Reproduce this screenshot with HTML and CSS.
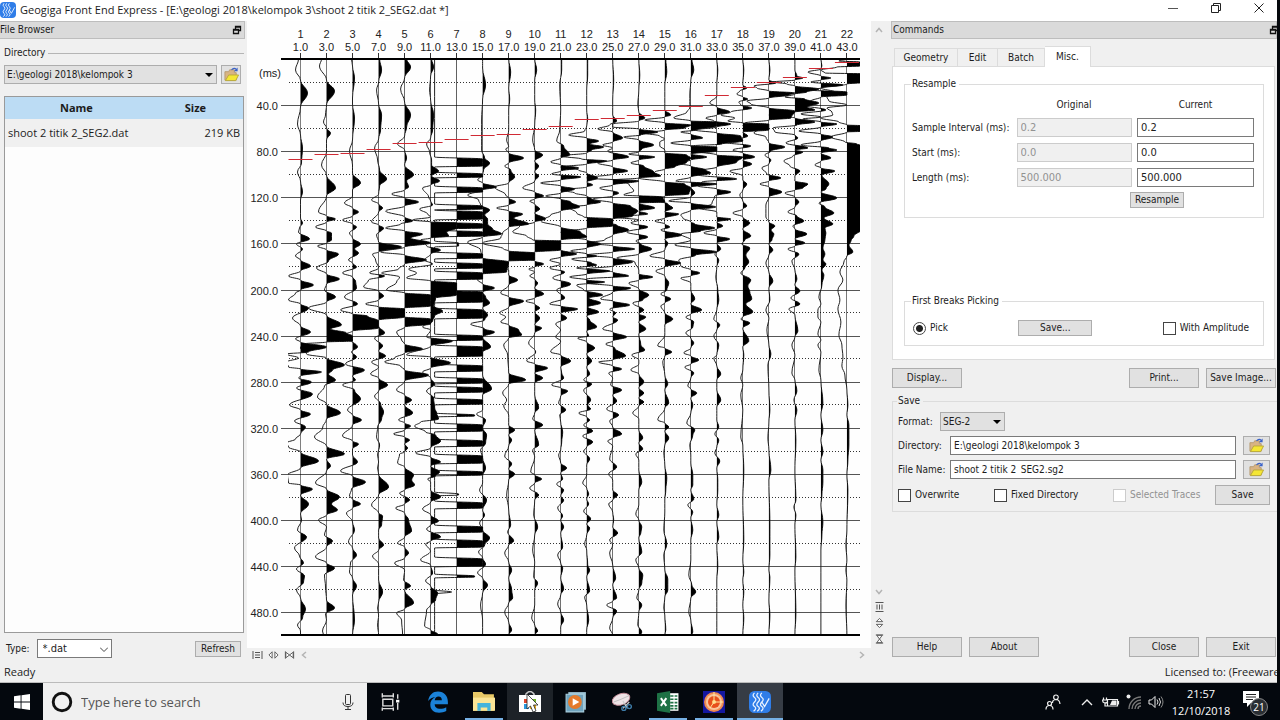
FILE: index.html
```html
<!DOCTYPE html>
<html lang="en">
<head>
<meta charset="utf-8">
<title>Geogiga Front End Express</title>
<link rel="stylesheet" href="styles.css">
</head>
<body>
<svg class="defs" aria-hidden="true">
  <symbol id="folder" viewBox="0 0 16 16">
    <path d="M1 14V5h4l1-2h5v3h2v8z" fill="#d9b484" stroke="#b89a70"/>
    <path d="M1.500 14.500L5 8.500h10.500L12.500 14.500z" fill="#f4e634" stroke="#b8a83a"/>
    <path d="M8 3q3-3 5-.5" fill="none" stroke="#3a62c8" stroke-width="1.300"/>
    <path d="M14.500 .5v4h-4z" fill="#3a62c8"/>
  </symbol>
  <symbol id="float" viewBox="0 0 10 10">
    <path d="M3.500 4V1.500h5v4H6M3.500 2h5M1.500 4.500h5v4h-5zM1.500 5h5" fill="none" stroke="#111" stroke-width="1.300"/>
  </symbol>
  <symbol id="wave" viewBox="0 0 24 24">
    <rect width="24" height="24" rx="6" fill="#2f7de8"/>
    <path d="M6 2q-3 3 0 5t0 5 0 5-1 5M10 2q-3 3 0 5t0 5 0 5-1 5M14 2q-3 3 0 5t0 5 0 5-1 5M14 12l3 5 5-9" fill="none" stroke="#e8f2ff" stroke-width="1.400"/>
  </symbol>
  <symbol id="lines" viewBox="0 0 10 10">
    <path d="M.5 1v8M9.500 1v8M2.500 2.500h5M2.500 5h5M2.500 7.500h5" stroke="#555" fill="none"/>
  </symbol>
  <symbol id="outward" viewBox="0 0 12 10">
    <path d="M4.500 1.500v7L1 5zM7.500 1.500v7L11 5z" fill="#fff" stroke="#555"/>
  </symbol>
  <symbol id="inward" viewBox="0 0 12 10">
    <path d="M1.500 1v8M10.500 1v8M2 2l4 3-4 3zM10 2L6 5l4 3z" fill="#fff" stroke="#555"/>
  </symbol>
  <symbol id="chev" viewBox="0 0 8 8">
    <path d="M6 1L2.500 4 6 7" fill="none" stroke="#b4b4b4" stroke-width="1.500"/>
  </symbol>
</svg>

<div class="window">
  <header class="titlebar">
    <svg class="app-icon"><use href="#wave"/></svg>
    <h1 class="title">Geogiga Front End Express - [E:\geologi 2018\kelompok 3\shoot 2 titik 2_SEG2.dat *]</h1>
    <div class="win-buttons">
      <button aria-label="Minimize"><svg viewBox="0 0 10 10"><path d="M0 5.500h10" stroke="#555"/></svg></button>
      <button aria-label="Restore"><svg viewBox="0 0 10 10"><path d="M.5 2.500h7v7h-7zM2.500 2.500v-2h7v7h-2" fill="none" stroke="#222"/></svg></button>
      <button aria-label="Close window"><svg viewBox="0 0 10 10"><path d="M.5 .5l9 9M9.500 .5l-9 9" stroke="#222"/></svg></button>
    </div>
  </header>

  <div class="main">
    <aside class="browser">
      <h2 class="dock-head">File Browser<svg><use href="#float"/></svg></h2>
      <div class="browser-body">
        <div class="rule-label"><label for="dir">Directory</label></div>
        <div class="dir-row">
          <span class="combo grow"><select id="dir"><option>E:\geologi 2018\kelompok 3</option></select><svg viewBox="0 0 8 4"><path d="M0 0h8L4 4z"/></svg></span>
          <button class="icon-btn small" aria-label="Open folder"><svg><use href="#folder"/></svg></button>
        </div>
        <div class="files">
          <table>
            <thead><tr><th class="col-name">Name</th><th>Size</th></tr></thead>
            <tbody><tr><td>shoot 2 titik 2_SEG2.dat</td><td class="num">219 KB</td></tr></tbody>
          </table>
        </div>
        <div class="type-row">
          <label for="type">Type:</label>
          <span class="combo white"><select id="type"><option>*.dat</option></select><svg class="open" viewBox="0 0 8 5"><path d="M0 .5l4 4 4-4" fill="none" stroke="#444"/></svg></span>
          <button class="btn refresh">Refresh</button>
        </div>
      </div>
    </aside>

    <section class="view">
      <svg id="chart" class="chart" viewBox="247 21 624 627" role="img" aria-label="Shot record"></svg>
      <div class="vbar">
        <svg class="up"><use href="#chev"/></svg>
        <div class="vtools">
          <svg class="down"><use href="#chev"/></svg>
          <svg class="turn tool"><use href="#lines"/></svg>
          <svg class="turn tool"><use href="#outward"/></svg>
          <svg class="turn tool"><use href="#inward"/></svg>
        </div>
      </div>
      <div class="hbar">
        <svg class="tool"><use href="#lines"/></svg>
        <svg class="tool"><use href="#outward"/></svg>
        <svg class="tool"><use href="#inward"/></svg>
        <svg class="left"><use href="#chev"/></svg>
        <svg class="right"><use href="#chev"/></svg>
      </div>
    </section>

    <aside class="commands">
      <h2 class="dock-head">Commands<svg><use href="#float"/></svg></h2>
      <nav class="tabs" role="tablist">
        <button class="tab wide" role="tab">Geometry</button>
        <button class="tab" role="tab">Edit</button>
        <button class="tab mid" role="tab">Batch</button>
        <button class="tab active" role="tab" aria-selected="true">Misc.</button>
      </nav>
      <div class="pane">
        <fieldset class="group resample">
          <legend>Resample</legend>
          <div class="grid">
            <span></span><span class="head">Original</span><span class="head">Current</span>
            <label for="si">Sample Interval (ms):</label><input aria-label="Original sample interval" value="0.2" disabled><input id="si" value="0.2">
            <label for="st">Start (ms):</label><input aria-label="Original start" value="0.0" disabled><input id="st" value="0.0">
            <label for="le">Length (ms):</label><input aria-label="Original length" value="500.000" disabled><input id="le" value="500.000">
          </div>
          <button class="btn do-resample">Resample</button>
        </fieldset>
        <fieldset class="group picking">
          <legend>First Breaks Picking</legend>
          <div class="pick-row">
            <label class="check"><input type="radio" checked>Pick</label>
            <button class="btn pick-save">Save...</button>
            <label class="check"><input type="checkbox">With Amplitude</label>
          </div>
        </fieldset>
      </div>
      <div class="row actions">
        <button class="btn big">Display...</button>
        <button class="btn big push">Print...</button>
        <button class="btn big">Save Image...</button>
      </div>
      <fieldset class="group save">
        <legend>Save</legend>
        <div class="field format">
          <label for="fmt">Format:</label>
          <span class="combo"><select id="fmt"><option>SEG-2</option></select><svg viewBox="0 0 8 4"><path d="M0 0h8L4 4z"/></svg></span>
        </div>
        <div class="field">
          <label for="sd">Directory:</label><input id="sd" value="E:\geologi 2018\kelompok 3">
          <button class="icon-btn" aria-label="Choose directory"><svg><use href="#folder"/></svg></button>
        </div>
        <div class="field">
          <label for="sf">File Name:</label><input id="sf" value="shoot 2 titik 2_SEG2.sg2">
          <button class="icon-btn" aria-label="Choose file"><svg><use href="#folder"/></svg></button>
        </div>
        <div class="checks">
          <label class="check"><input type="checkbox">Overwrite</label>
          <label class="check"><input type="checkbox">Fixed Directory</label>
          <label class="check off"><input type="checkbox" disabled>Selected Traces</label>
          <button class="btn save-btn">Save</button>
        </div>
      </fieldset>
      <div class="row bottom">
        <button class="btn big">Help</button>
        <button class="btn big">About</button>
        <button class="btn big push">Close</button>
        <button class="btn big">Exit</button>
      </div>
    </aside>
  </div>
  <footer class="status"><span>Ready</span><span class="license">Licensed to: (Freeware)</span></footer>
</div>

<div class="taskbar">
  <button class="start" aria-label="Start"><svg viewBox="0 0 16 16"><path d="M0 2.300l6.600-1v6.200H0zM7.500 1.200L16 0v7.500H7.500zM0 8.400h6.600v6.300L0 13.700zM7.500 8.400H16V16l-8.500-1.200z" fill="#fff"/></svg></button>
  <div class="search">
    <svg class="ring" viewBox="0 0 20 20"><circle cx="10" cy="10" r="8" fill="none" stroke="#111" stroke-width="2.600"/></svg>
    <input class="search-box" aria-label="Search" placeholder="Type here to search">
    <svg class="mic" viewBox="0 0 12 16"><rect x="3.500" y=".5" width="5" height="10" rx="1" fill="none" stroke="#333"/><path d="M1 8.500q0 4 5 4t5-4M6 12.500V15M3 15.500h6" fill="none" stroke="#333"/></svg>
  </div>
  <button class="task view-btn" aria-label="Task view"><svg viewBox="0 0 20 20"><path d="M3 2v4M13 2v4M3 4.500h10M3.500 7.500h9v6h-9zM3 18v-3M13 18v-3M3 16h10M17 3v4M17 11v6" fill="none" stroke="#ddd" stroke-width="1.300"/><path d="M15.500 8h3v2.500h-3z" fill="#fff"/></svg></button>
  <button class="task" aria-label="Edge"><svg viewBox="0 0 20 20"><path d="M1 9C2 3.500 5.500.5 10 .5c5.500 0 9 4 9 9.500v2H7c0 2.500 2 4.200 5 4.200 2 0 4-.6 5.500-1.500v3.500c-2 1-4 1.500-6.500 1.500-5 0-8-3-8-7.500C3 9.500 4.500 7 7.500 5.500 5 6 2.500 7 1 9zM7 8.500h6.500C13.500 6.500 12.500 5 10.500 5S7.300 6.500 7 8.500z" fill="#1b82d8"/></svg></button>
  <button class="task run" aria-label="File Explorer"><svg viewBox="0 0 20 20"><path d="M0 1h8l2 2h9v15H0z" fill="#e8c866"/><path d="M0 6h20v12H0z" fill="#fbe596"/><path d="M4 18v-7h12v7h-3v-3H7v3z" fill="#45b4dc"/></svg></button>
  <button class="task hover" aria-label="Store"><svg viewBox="0 0 22 22"><path d="M7 5V3q4-5 8 0v2" fill="none" stroke="#ccc" stroke-width="1.500"/><path d="M0 4h22v17H0z" fill="#fff"/><path d="M5 8h5v4H5z" fill="#e04830"/><path d="M11 8h6v4h-6z" fill="#72b52c"/><path d="M5 13h5v5H5z" fill="#2a9adf"/><path d="M11 13h6v5h-6z" fill="#edb020"/><path d="M8 3v15l3.500-3 2.500 6 3-1-2.500-6H19z" fill="#fff" stroke="#222" stroke-width=".8"/></svg></button>
  <button class="task" aria-label="Media player"><svg viewBox="0 0 20 20"><path d="M3 1h16v16H3z" fill="#9ec3d4"/><path d="M1 3h16v16H1z" fill="#6fa3bd" stroke="#a8cddd"/><circle cx="9" cy="10" r="6.300" fill="#e47a2c"/><path d="M7 6.500v7l6-3.500z" fill="#fff"/></svg></button>
  <button class="task" aria-label="Snipping Tool"><svg viewBox="0 0 24 20"><ellipse cx="11" cy="7" rx="10" ry="6" transform="rotate(-20 11 7)" fill="#eee3e6" stroke="#c58c98"/><path d="M11 7l9-4M11 7l-8 3" stroke="#bbb"/><path d="M13 9l5 8M20 10l-7 7" stroke="#ccc" stroke-width="1.300"/><circle cx="14" cy="17" r="2.200" fill="none" stroke="#3e7ca8" stroke-width="1.500"/><circle cx="20" cy="15" r="2.200" fill="none" stroke="#3e7ca8" stroke-width="1.500"/></svg></button>
  <button class="task run" aria-label="Excel"><svg viewBox="0 0 20 20"><path d="M10 2h9.500v16H10z" fill="#fff"/><path d="M12 4.500h3M16 4.500h2.500M12 7.500h3M16 7.500h2.500M12 10.500h3M16 10.500h2.500M12 13.500h3M16 13.500h2.500M12 16h3M16 16h2.500" stroke="#217346" stroke-width="1.500"/><path d="M0 2l12-2v20L0 18z" fill="#1e7145"/><path d="M3.500 6.500l5 7M8.500 6.500l-5 7" stroke="#fff" stroke-width="1.800"/></svg></button>
  <button class="task run" aria-label="Recorder"><svg viewBox="0 0 22 22"><path d="M0 0h22v22H0z" fill="#1518a0"/><circle cx="11" cy="11" r="10" fill="#f08a50"/><circle cx="11" cy="11" r="8" fill="#f9c49a"/><circle cx="11" cy="11" r="6" fill="#e8501c"/><circle cx="11" cy="11" r="2" fill="#ffd27a"/><path d="M11 1v10h9M11 11l-4 6" fill="none" stroke="#ffe9a0"/></svg></button>
  <button class="task run current" aria-label="Geogiga"><svg><use href="#wave"/></svg></button>
  <div class="tray">
    <svg class="people" viewBox="0 0 16 16"><path d="M4.500 7.500a2 2 0 1 1 .1 4 2 2 0 0 1-.1-4zM1 15.500q0-4 3.500-4t3.500 4M11 1a2.300 2.300 0 1 1-.1 4.600A2.300 2.300 0 0 1 11 1zM7.500 9q0-3.500 3.500-3.500T15 10" fill="none" stroke="#eee" stroke-width="1.200"/></svg>
    <svg class="t-chev" viewBox="0 0 12 8"><path d="M1 7l5-5 5 5" fill="none" stroke="#eee" stroke-width="1.400"/></svg>
    <svg class="battery" viewBox="0 0 18 12"><path d="M5.500 3.500h10v6.500h-10zM16.500 5v3.500M1.500 1.500v3M4.500 1.500v3M.5 4h5v2q-2 2-4.500 0zM3 7v3h2.500" fill="none" stroke="#eee" stroke-width="1.200"/><path d="M10 4.500h4.500V9H8z" fill="#eee"/></svg>
    <svg class="wifi" viewBox="0 0 16 16"><path d="M3 15A12 12 0 0 1 15 3M6 15a9 9 0 0 1 9-9M9 15a6 6 0 0 1 6-6M12 15a3 3 0 0 1 3-3" fill="none" stroke="#777" stroke-width="1.400"/><circle cx="2.500" cy="2.500" r="2" fill="#eee"/></svg>
    <svg class="sound" viewBox="0 0 16 14"><path d="M1 5h2.500L7 1.500v11L3.500 9H1z" fill="none" stroke="#eee"/><path d="M9 4.500q2 2.500 0 5M11 3q3 4 0 8" fill="none" stroke="#ddd"/><path d="M13 1.500q4 5.500 0 11" fill="none" stroke="#888"/></svg>
    <div class="clock"><span>21:57</span><span>12/10/2018</span></div>
    <button class="notes" aria-label="Notifications"><svg viewBox="0 0 16 16"><path d="M0 0h16v12H8l-4 4v-4H0z" fill="#fff"/><path d="M3 3.500h10M3 6h10M3 8.500h7" stroke="#222"/></svg><span class="badge">21</span></button>
  </div>
</div>
<script src="chart.js"></script>
</body>
</html>
```

FILE: styles.css
```css
* { box-sizing: border-box; }
body {
  margin: 0;
  height: 100vh;
  display: flex;
  flex-direction: column;
  overflow: hidden;
  background: #f0f0f0;
  color: #1c1c1c;
  font: 10px/14px "DejaVu Sans Condensed", "DejaVu Sans", sans-serif;
}
button, input, select { font: inherit; color: inherit; margin: 0; border-radius: 0; }
h1, h2 { margin: 0; font-weight: normal; }
.defs { position: absolute; width: 0; height: 0; }
svg { display: block; flex: none; }

.window {
  flex: 1;
  min-height: 0;
  display: flex;
  flex-direction: column;
  border-right: 3px solid #05080c;
  overflow: hidden;
}
.titlebar {
  height: 21px;
  flex: none;
  display: flex;
  align-items: center;
  background: #fff;
  padding-bottom: 2px;
}
.app-icon { width: 16px; height: 16px; }
.title { font: 11px/18px "Open Sans", "Noto Sans", sans-serif; margin-left: 4px; }
.win-buttons { margin-left: auto; margin-right: -3px; display: flex; padding-bottom: 4px; }
.win-buttons button { border: 0; background: none; padding: 0; width: 43px; display: grid; place-items: center; }
.win-buttons svg { width: 10px; height: 10px; }

.main { flex: 1; min-height: 0; display: flex; }
.dock-head {
  height: 18px;
  flex: none;
  display: flex;
  align-items: center;
  justify-content: space-between;
  background: #dadada;
  border: 1px solid #bdbdbd;
  border-left: 0;
  font-size: 10px;
}
.dock-head svg { width: 10px; height: 10px; margin-right: 2px; }

.browser { width: 245px; flex: none; display: flex; flex-direction: column; }
.browser-body { flex: 1; display: flex; flex-direction: column; padding: 7px 1px 4px 4px; }
.rule-label { display: flex; align-items: center; gap: 3px; }
.rule-label::after { content: ""; flex: 1; border-top: 1px solid #b5b5b5; }
.dir-row { display: flex; gap: 4px; margin: 5px 3px 12px 0; }
.combo { position: relative; display: flex; }
.combo select {
  appearance: none;
  width: 100%;
  height: 19px;
  padding: 0 2px;
  border: 1px solid #adadad;
  background: #e1e1e1;
}
.combo svg { position: absolute; right: 4px; top: 8px; width: 8px; height: 4px; pointer-events: none; }
.combo svg.open { height: 5px; }
.combo.white select { background: #fff; border-color: #7a7a7a; width: 75px; padding: 0 5px; font-size: 11px; }
.grow { flex: 1; }
.icon-btn { width: 27px; height: 19px; padding: 0; border: 1px solid #adadad; background: #e1e1e1; display: grid; place-items: center; }
.icon-btn.small { width: 20px; }
.icon-btn svg { width: 15px; height: 15px; }
.files { flex: 1; background: #fdfdfd; border: 1px solid #9a9a9a; font-family: "Open Sans", "Noto Sans", sans-serif; }
.files table { width: 100%; border-collapse: collapse; table-layout: fixed; }
.files th { height: 22px; padding: 0; background: #bcdcf4; font-size: 11px; font-weight: bold; }
.files td { height: 28px; padding: 0 3px; background: #f0f0f0; font-size: 11px; }
.col-name { width: 60%; }
.files .num { text-align: right; }
.type-row { display: flex; align-items: center; gap: 7px; padding: 6px 3px 0 2px; }
.btn { border: 1px solid #adadad; background: #e1e1e1; padding: 0 3px; height: 16px; line-height: 14px; text-align: center; white-space: nowrap; }
.refresh { margin-left: auto; width: 46px; }

.view { flex: 1; min-width: 0; display: grid; grid-template: minmax(0, 1fr) 14px / minmax(0, 1fr) 16px; padding: 0 4px 0 2px; }
.chart { width: 100%; height: 100%; background: #fefefe; }
.chart text { font: 11px "Liberation Sans", Arial, sans-serif; fill: #222; }
.grid-line { stroke: #555; }
.axis { stroke: #000; stroke-width: 2; }
.dots { stroke: #333; stroke-dasharray: 1 2; }
.tick { stroke: #333; }
.wiggle { fill: none; stroke: #222; stroke-width: 1; }
.lobe { fill: #000; }
.pick { stroke: #d02a34; stroke-width: 1; }
.vbar { display: flex; flex-direction: column; justify-content: space-between; align-items: center; padding: 5px 0 4px; }
.vtools { display: flex; flex-direction: column; align-items: center; gap: 6px; }
.vbar svg, .hbar svg { width: 8px; height: 8px; }
.vbar .tool, .hbar .tool { width: 11px; height: 10px; }
.up, .turn { transform: rotate(90deg); }
.down { transform: rotate(-90deg); }
.hbar { display: flex; align-items: center; gap: 5px; padding: 0 5px; }
.right { margin-left: auto; transform: rotate(180deg); }

.commands { width: 386px; flex: none; display: flex; flex-direction: column; }
.commands .dock-head { border-left: 1px solid #bdbdbd; padding-left: 1px; }
.commands .dock-head svg { margin-right: -3px; }
.tabs { display: flex; align-items: flex-end; margin-top: 7px; height: 20px; padding-left: 3px; }
.tab { height: 18px; width: 40px; padding: 0; border: 1px solid #dcdcdc; border-width: 1px 1px 0 0; background: #f0f0f0; }
.tab.wide { width: 64px; border-left-width: 1px; }
.tab.mid { width: 47px; }
.tab.active { height: 21px; width: 46px; margin-bottom: -1px; background: #fff; position: relative; }
.pane { background: #fff; border: 1px solid #dcdcdc; margin: 0 2px 0 1px; height: 294px; padding: 10px 10px 13px 11px; display: flex; flex-direction: column; justify-content: space-between; }
.group { border: 1px solid #dcdcdc; margin: 0; padding: 0 7px; min-width: 0; }
.group legend { padding: 0 3px 0 1px; margin-left: -1px; }
.resample { height: 141px; padding: 0 9px 0 7px; display: flow-root; }
.grid { display: grid; grid-template-columns: 99px 115px 117px; column-gap: 5px; row-gap: 6px; align-items: center; margin-top: 7px; justify-content: space-between; }
.head { text-align: center; }
.grid label { white-space: nowrap; }
input:not([type]), .search-box { min-width: 0; }
.grid input, .field input { height: 19px; width: 100%; padding: 0 3px; border: 1px solid #7a7a7a; background: #fff; }
.grid input { font-size: 11px; }
.grid input:disabled { border-color: #ccc; background: #f0f0f0; color: #929292; }
.do-resample { display: block; width: 54px; margin: 5px 0 0 218px; }
.picking { height: 52px; }
.pick-row { display: flex; align-items: center; justify-content: space-between; padding: 12px 7px 0 1px; }
.pick-save { width: 74px; }
.check { display: flex; align-items: center; gap: 4px; white-space: nowrap; }
.check input { appearance: none; width: 13px; height: 13px; border: 1px solid #444; background: #fff; }
.check input[type="radio"] { border-radius: 50%; background: radial-gradient(circle, #222 0 3px, #fff 4px); }
.check.off { color: #929292; }
.check.off input { border-color: #ccc; }
.row { display: flex; gap: 7px; padding: 0 1px; }
.btn.big { width: 70px; height: 20px; line-height: 18px; padding: 0; }
.push { margin-left: auto; }
.actions { margin: 8px 0 6px; }
.save { margin-left: 1px; border-right: 0; height: 118px; padding: 0 7px 0 5px; }
.field { display: flex; align-items: center; margin-bottom: 5px; }
.field label { width: 52px; flex: none; white-space: nowrap; }
.format { margin-top: 4px; }
.format label { width: 42px; }
.format .combo select { width: 65px; }
.field .icon-btn { margin-left: 7px; flex: none; }
.checks { display: flex; align-items: center; justify-content: space-between; margin-top: 6px; }
.save-btn { width: 55px; height: 20px; line-height: 18px; }
.checks .save-btn { margin-left: -20px; }
.bottom { margin-top: auto; padding-bottom: 5px; }
.status { height: 21px; flex: none; display: flex; align-items: center; justify-content: space-between; padding-left: 4px; border-bottom: 1px solid #bbb; font-family: "Open Sans", "Noto Sans", sans-serif; font-size: 11px; white-space: nowrap; }
.license { margin-right: -6px; }

.taskbar { height: 37px; flex: none; display: flex; background: #04080e; color: #fff; font-family: "Open Sans", "Noto Sans", sans-serif; }
.taskbar button { border: 0; padding: 0; background: none; display: grid; place-items: center; }
.taskbar .start { width: 43px; }
.start svg { width: 16px; height: 16px; }
.search { width: 324px; background: #f0f0f0; display: flex; align-items: center; padding: 0 13px 0 8px; gap: 8px; }
.ring { width: 22px; height: 22px; }
.search-box { flex: 1; border: 0; padding: 0; background: none; font-size: 13px; height: 24px; color: #555; }
.search-box::placeholder { color: #555; opacity: 1; }
.mic { width: 12px; height: 16px; }
.taskbar .task { width: 46px; position: relative; }
.taskbar .view-btn { width: 48px; padding-right: 3px; }
.task svg { width: 22px; height: 22px; }
.taskbar .hover { background: #1d2228; }
.taskbar .current { background: #363c45; }
.run::after { content: ""; position: absolute; bottom: 0; left: 4px; right: 4px; height: 2px; background: #76b0e4; }
.current::after { left: 0; right: 0; }
.tray { margin-left: auto; display: flex; align-items: center; padding-right: 11px; }
.people { width: 16px; height: 16px; margin-right: 20px; }
.t-chev { width: 12px; height: 8px; margin-right: 9px; }
.battery { width: 18px; height: 12px; margin-right: 6px; }
.wifi { width: 16px; height: 16px; margin-right: 6px; }
.sound { width: 16px; height: 14px; margin-right: 9px; }
.clock { display: flex; flex-direction: column; align-items: center; font-size: 11px; line-height: 17px; width: 56px; }
.taskbar .notes { margin-left: 14px; width: 26px; height: 26px; position: relative; place-items: start; }
.notes svg { width: 16px; height: 16px; margin-top: 2px; }
.badge { position: absolute; right: 1px; bottom: -1px; width: 18px; height: 18px; border-radius: 50%; background: #2a2e33; border: 1px solid #888; font-size: 10px; line-height: 16px; color: #fff; }
```

FILE: chart.js
```js
// Wiggle-trace plot: every trace is a list of "depth,deflection" pairs.
const traces = [
"59,-2 70,-5 80,0 93,7 107,0 124,-3 135,0 148,2 163,1 172,-3 181,0 192,2 200,0 218,0 223,2 228,-1 232,-2 239,9 244,-4 249,2 256,-5 260,0 266,10 271,0 276,-12 280,0 285,13 290,0 293,-5 300,-12 304,0 308,8 318,-8 326,0 332,10 339,-5 342,0 347,26 352,8 354,-14 358,-2 362,-14 367,-12 369,0 372,21 376,0 378,-2 382,11 388,-4 394,12 405,-11 410,0 414,10 421,-6 427,5 434,0 439,-5 443,-14 447,-12 452,0 461,18 468,0 475,-13 483,-12 485,0 489,12 495,0 504,8 514,0 520,1 530,-3 537,6 548,-6 556,-1 563,3 569,-4 576,4 582,3 590,-4 598,0 609,5 618,2 625,-3 631,0 635,0",
"59,-5 66,-7 80,0 91,8 105,0 115,-1 122,-3 128,0 133,4 140,0 152,0 165,-5 175,0 188,9 196,0 212,-8 216,0 219,9 222,0 227,-11 231,0 233,5 240,5 243,0 246,-9 250,0 254,12 261,2 268,-10 274,0 279,13 284,0 290,-2 297,9 302,0 308,-18 315,0 325,15 329,4 333,20 336,26 341,26 342,0 344,-24 348,-26 354,-20 358,0 365,18 370,6 374,2 380,9 386,-2 397,-9 404,0 413,14 419,0 428,-4 437,-12 446,0 454,18 459,0 466,4 471,0 483,-11 489,0 497,13 504,5 510,11 515,0 520,-8 527,0 535,-2 541,6 547,0 557,-11 563,0 568,8 575,-2 587,-1 600,0 608,8 614,-1 620,0 631,-4 635,-3",
"59,-1 66,0 78,2 98,0 104,0 118,2 140,0 151,-3 165,0 173,0 183,8 190,0 196,0 203,-8 208,0 212,6 216,0 220,-10 224,0 227,4 233,-3 238,0 244,8 249,2 253,6 260,-4 263,0 267,4 273,-10 277,0 281,3 288,4 297,-8 304,5 310,-12 314,0 316,15 321,26 328,26 331,0 334,-6 338,-4 347,5 352,-1 357,4 364,-7 370,12 376,0 380,3 385,-10 390,2 399,8 410,-5 415,0 420,9 425,0 436,-10 441,0 444,6 449,0 455,0 462,5 471,-12 476,0 482,13 489,-1 496,-3 499,0 504,8 508,0 513,-6 522,0 530,2 542,-4 548,0 555,4 563,-2 572,-3 578,0 586,4 595,0 620,2 635,0",
"59,1 70,3 82,0 90,-2 104,0 115,3 130,2 139,0 148,-4 160,-1 170,1 179,8 186,1 194,0 200,-7 204,0 208,4 212,0 222,-7 225,0 228,5 235,-2 242,0 247,23 252,0 254,-6 260,-3 268,0 273,-9 276,6 280,-10 287,-15 291,0 296,5 300,0 304,-13 307,0 309,26 317,26 320,0 326,0 333,6 338,-4 346,4 351,0 356,7 362,-7 367,0 374,-8 378,0 385,9 391,0 396,-4 404,2 412,5 419,3 427,-1 437,-2 445,1 455,-1 462,0 468,-1 474,0 487,10 495,0 505,-7 513,0 516,4 525,3 530,0 538,0 545,5 550,0 556,-6 564,0 580,0 592,4 602,0 608,-1 615,0 625,-1 635,0",
"59,2 67,6 78,0 89,-4 102,0 115,6 127,2 136,0 144,-7 150,0 158,2 165,0 175,9 181,2 187,4 190,0 194,-13 198,0 202,14 206,0 211,-19 217,0 221,8 224,-4 228,-19 231,0 234,18 238,6 243,26 247,0 252,-24 255,0 260,22 264,0 269,-6 273,-23 277,-5 282,-8 290,-18 293,0 295,26 306,26 308,0 313,-20 317,0 319,26 324,26 327,0 332,-8 340,-3 344,0 349,18 353,0 358,-10 362,-20 366,-4 370,0 375,24 381,0 390,-8 395,0 400,7 405,0 413,8 420,-6 423,0 426,6 430,0 434,-11 437,0 440,5 444,0 448,3 452,0 454,-5 463,-7 467,0 475,9 480,7 485,10 490,0 493,-5 500,5 504,0 508,-9 513,0 520,4 531,7 537,0 543,-7 547,0 553,4 558,0 563,-10 570,0 580,-1 586,6 590,0 603,9 609,0 613,-8 620,-3 635,-2",
"59,1 67,3 76,0 90,-1 100,0 115,3 130,2 138,0 144,-4 152,-1 160,1 165,1 171,8 176,1 181,9 185,0 188,-8 197,-2 201,0 205,2 209,-11 214,-3 217,0 220,-18 222,0 223,26 228,26 232,16 236,18 238,0 240,-10 246,-4 250,10 254,0 260,-6 264,2 269,-22 273,-14 278,-24 281,0 283,26 295,26 298,5 306,3 311,12 316,4 321,2 327,-8 330,0 337,-4 341,22 346,0 355,-24 357,0 363,20 368,0 372,-8 378,0 384,4 391,-4 398,3 408,4 413,6 419,8 422,-10 426,-16 432,-5 435,5 441,10 448,0 453,-15 457,0 462,10 466,0 472,9 476,5 479,-3 482,0 490,0 497,10 502,0 509,-8 515,0 521,8 525,0 529,-4 537,10 541,0 544,-5 551,0 560,-10 565,0 573,2 581,-5 586,0 593,7 600,5 605,0 610,-4 626,-6 630,0 634,7 635,6",
"",
"59,0 68,0 85,3 99,0 120,-1 150,-1 158,2 163,7 170,1 175,0 180,-5 183,0 187,14 190,0 195,-15 200,-4 205,-2 210,7 215,2 219,5 224,5 229,10 234,19 237,0 242,-15 250,-2 258,0 262,26 272,24 274,0 280,-5 284,0 288,12 292,0 297,3 303,7 308,0 315,5 320,2 324,-12 329,2 332,12 337,0 347,8 352,0 375,0 389,9 395,0 410,0 414,-6 420,3 428,0 435,4 443,3 450,-2 458,0 468,3 476,0 483,0 490,-3 500,4 510,0 515,2 523,-3 530,0 538,7 545,2 552,-4 558,0 564,3 573,-5 578,0 585,5 593,0 605,-2 620,0 635,0",
"59,0 72,2 88,0 99,1 110,0 130,0 140,-2 147,0 149,-3 153,0 158,15 163,0 166,-4 170,2 177,6 183,0 187,-14 195,-3 198,0 202,7 205,0 208,-12 211,0 214,14 218,5 224,20 227,0 233,-6 238,-8 243,-26 249,-5 251,0 253,26 260,26 261,0 266,-20 270,0 275,0 280,9 285,0 293,-8 297,0 301,15 307,0 313,-9 317,-3 322,-8 325,0 330,10 335,13 338,0 345,-5 355,-1 373,0 380,17 384,0 393,-6 400,-2 406,-5 415,0 425,0 430,6 435,0 440,3 446,0 456,-4 464,3 469,0 474,6 480,0 495,-2 510,0 525,2 532,-1 541,5 545,0 553,-4 562,0 570,3 578,0 590,3 598,4 603,0 612,-4 622,0 630,3 635,0",
"59,0 70,2 80,0 100,0 110,1 125,0 140,-2 150,0 155,8 161,0 166,4 172,0 176,4 181,0 188,-12 192,0 196,9 199,0 201,-5 204,0 209,5 213,0 219,11 222,0 226,-15 232,-22 236,-8 240,-2 241,26 250,26 252,0 255,-24 258,-10 261,0 264,9 267,0 269,-6 272,0 276,-5 279,0 283,3 288,0 294,9 298,0 301,-9 304,0 308,5 312,0 318,5 325,0 328,7 333,0 343,-6 352,1 361,-8 364,0 368,13 373,0 378,8 383,0 395,0 408,4 413,0 419,-2 425,8 430,0 445,4 450,-2 457,0 472,-4 475,0 479,7 483,0 488,-5 495,4 500,0 515,-1 527,3 535,0 550,-2 562,0 577,-1 583,3 590,0 605,0 618,-3 625,0 631,3 635,0",
"59,1 70,1 85,-1 110,0 130,-1 141,-4 146,3 155,9 158,0 162,-10 165,0 168,18 171,0 174,-9 177,20 180,0 183,-20 186,0 189,14 193,0 196,-15 199,0 202,10 207,19 211,0 215,-10 221,-20 227,0 232,20 237,26 240,0 245,-15 250,0 254,16 257,0 260,-11 264,0 268,-11 272,4 278,-8 284,10 290,-4 298,4 304,-11 306,0 309,17 313,0 318,6 324,-5 330,0 337,-5 341,0 352,-10 355,0 361,10 367,0 373,1 378,3 385,-9 388,0 391,7 396,0 403,-2 410,5 415,-1 422,0 432,2 442,1 450,0 455,-2 463,0 468,6 473,0 479,2 484,-4 490,3 496,0 500,3 508,-3 516,2 520,0 527,3 533,0 547,2 555,-3 563,0 568,2 578,0 589,3 595,0 604,-3 612,0 620,3 627,0 635,0",
"59,1 75,1 90,0 110,0 119,1 126,0 131,-2 135,-18 138,0 141,12 144,3 147,17 150,5 153,0 156,-26 159,-5 161,20 164,0 167,-26 170,-8 173,0 178,11 182,0 185,6 187,0 190,-26 193,-12 196,0 199,5 202,14 205,0 207,-18 213,-10 217,-3 219,26 226,26 228,0 232,-26 237,-16 240,0 244,14 248,0 251,-16 254,0 256,10 259,-15 263,5 265,10 268,-10 271,23 274,0 277,-17 280,0 282,18 285,-10 290,-3 295,16 298,2 303,14 307,1 312,12 316,0 320,3 327,10 331,0 336,2 338,-9 342,0 348,8 354,0 361,5 367,0 374,3 380,-3 384,5 390,-3 400,4 405,1 409,4 413,-8 417,0 420,3 425,-3 431,6 436,-4 442,6 447,0 451,-3 459,3 465,0 475,0 483,-4 488,0 494,2 499,0 504,2 511,-3 519,4 524,0 528,3 535,0 544,-2 550,0 565,1 570,3 577,0 591,3 597,-2 605,0 620,2 630,0 635,0",
"59,0 80,1 100,0 115,0 121,4 125,-3 129,-15 132,0 138,10 142,0 145,-10 148,0 151,-5 157,16 160,0 163,-15 167,0 171,15 174,0 178,-26 181,26 185,0 188,-13 193,6 196,0 199,-20 203,0 206,18 211,25 216,20 219,0 222,-14 225,4 230,16 235,0 240,-8 243,-26 246,0 249,22 252,0 255,-26 258,0 262,20 266,0 269,-26 272,0 276,16 279,-26 283,-26 286,0 288,18 292,0 299,-12 301,0 305,17 309,-3 313,3 317,0 320,5 329,-10 332,0 337,14 341,0 344,-7 348,2 356,13 360,0 362,-14 366,0 369,9 373,-4 378,0 385,-2 390,9 395,0 401,4 409,-6 415,6 421,-3 427,0 434,9 438,0 441,-5 446,0 459,-3 467,4 474,-4 480,0 490,0 495,5 500,0 504,-4 512,0 520,1 527,0 533,5 540,-3 545,0 553,-3 565,0 578,3 585,0 598,4 601,0 605,-6 611,4 618,0 628,-3 635,0",
"59,0 75,1 90,0 105,-1 112,0 118,6 121,0 124,-26 127,-26 129,0 132,19 135,2 137,-15 140,0 145,15 149,3 152,0 154,-10 157,16 160,0 163,-8 166,5 172,15 176,22 178,0 180,-26 184,-10 191,-5 195,-15 197,24 202,26 203,0 208,16 211,0 214,9 217,-24 220,0 223,-8 227,9 232,-12 237,9 241,-3 244,2 249,13 254,0 258,-22 262,-4 270,0 274,0 277,14 280,0 283,-10 289,0 295,10 300,4 303,-6 310,5 314,0 317,7 322,0 329,7 334,0 345,2 350,6 355,-7 360,0 364,0 370,-8 374,0 382,5 388,0 393,5 398,0 402,5 406,0 413,-6 419,0 430,0 438,4 443,0 449,4 454,-3 460,0 470,0 482,3 490,0 505,0 514,-3 520,0 527,3 533,2 538,0 552,3 560,-3 568,0 575,4 583,3 590,0 598,-2 605,3 612,0 625,-1 632,3 635,2",
"59,1 72,2 85,0 110,0 115,6 117,0 120,-20 123,0 125,26 128,20 130,0 133,-20 136,-5 139,0 142,-5 146,-5 150,0 153,0 155,22 158,26 162,22 167,10 169,0 172,-10 178,-26 182,0 184,20 188,26 194,24 196,0 200,-12 204,3 208,8 212,0 214,14 218,0 221,-10 224,0 227,5 230,-4 235,17 239,0 243,3 250,0 256,-15 259,0 263,16 267,0 271,-9 276,0 283,4 290,2 294,-4 299,6 303,0 306,-4 313,0 319,8 325,0 335,0 346,-7 348,0 352,7 356,0 362,-2 375,0 384,3 390,0 403,4 408,0 420,-7 423,0 427,4 431,0 438,4 445,0 452,-1 465,0 478,2 490,1 500,0 512,0 530,-1 544,2 555,-1 570,0 579,3 590,3 597,0 608,-1 615,0 630,1 635,0",
"59,1 70,3 80,0 95,-1 108,-1 112,-4 118,-17 121,0 122,26 126,26 130,5 132,-10 134,0 138,12 140,0 143,-20 146,0 147,26 151,26 154,0 157,16 160,0 163,-15 166,0 170,15 173,20 177,0 181,-15 184,26 187,0 193,4 197,0 201,-22 203,0 207,25 210,0 215,-10 218,-8 222,0 224,4 228,24 231,10 234,-10 240,0 245,-16 248,0 252,26 255,5 260,-12 266,-10 270,0 273,9 276,0 278,-10 283,0 290,0 299,4 304,0 310,11 314,0 317,-5 322,3 327,2 333,-5 338,0 343,3 348,0 353,-7 356,0 360,8 364,0 367,-6 373,3 378,0 386,-3 389,0 393,6 398,0 405,2 413,0 423,-4 430,4 435,2 445,-1 455,0 463,0 475,2 485,2 490,0 499,3 505,-3 512,2 518,0 530,2 540,0 560,0 575,-2 585,1 592,5 598,0 612,-2 620,0 632,2 635,1",
"59,0 70,1 85,0 96,0 103,-7 107,0 112,13 115,0 118,-11 121,-3 124,14 127,0 130,-22 133,0 136,24 141,26 144,5 146,-26 148,-5 151,-22 155,0 157,26 162,20 167,0 171,-18 175,-18 179,20 182,-15 186,-19 189,0 192,14 196,-2 204,-5 208,-18 212,0 217,0 219,14 222,0 226,6 229,0 233,-13 236,0 239,13 243,0 249,4 254,-2 260,2 267,0 277,-1 290,1 300,2 310,0 319,-3 325,3 330,0 336,-3 345,2 355,0 358,-3 366,0 374,4 380,0 390,0 400,4 407,0 420,0 427,2 434,-2 440,2 447,0 453,-2 461,3 468,0 480,1 490,1 505,0 515,2 522,0 537,2 545,0 566,1 580,0 635,0",
"59,0 70,1 85,0 88,4 91,-3 94,-6 97,0 99,5 102,-4 105,-2 108,9 112,-12 115,-22 118,-8 121,-15 123,0 124,26 130,26 132,0 136,5 142,-20 146,8 150,-10 153,0 157,12 160,0 164,9 168,0 171,-13 176,0 180,0 184,4 190,0 195,-3 201,0 206,4 209,0 213,-10 217,0 223,7 229,0 236,8 240,2 244,-1 248,7 255,3 262,6 268,2 273,-2 280,8 286,5 292,7 299,9 304,3 312,10 317,0 319,-2 323,7 328,0 341,6 347,0 355,1 370,0 378,-2 385,0 395,-2 410,0 437,-2 445,0 470,1 500,0 540,1 560,0 572,1 580,0 592,1 605,0 618,1 635,0",
"59,0 70,1 80,0 83,7 86,-15 88,-12 91,0 93,26 95,20 98,0 101,-22 104,-18 108,0 111,26 118,22 120,0 123,-24 126,-26 129,-10 133,-15 137,-3 143,0 147,16 151,2 155,-4 160,2 164,0 168,-7 174,-2 178,12 181,0 184,-9 187,0 192,13 197,0 205,-3 217,-3 222,0 226,6 230,2 234,5 240,3 244,0 250,4 255,0 263,-3 272,0 281,4 288,0 300,1 310,-3 318,0 330,-2 345,0 354,2 365,-1 390,0 410,1 422,0 438,-1 450,0 470,2 480,0 525,1 555,1 570,0 577,1 600,0 615,1 635,0",
"59,0 70,0 76,2 78,8 80,0 82,-22 84,-8 86,0 89,24 92,12 94,0 97,-10 99,10 103,24 107,12 110,20 112,0 115,-26 118,0 122,20 125,2 128,-22 132,-20 135,0 138,3 143,-9 148,13 150,0 152,8 156,-2 161,-11 166,-5 171,5 176,0 181,0 184,13 188,8 190,0 193,-10 197,0 202,4 207,0 212,-7 216,2 221,9 226,-2 229,0 234,12 239,0 243,10 246,0 249,-7 254,4 261,-3 270,0 279,2 285,0 291,5 298,-4 304,5 309,-6 315,0 331,3 337,0 345,-3 355,0 373,-3 380,0 391,2 400,-1 410,2 420,0 440,1 470,0 500,1 507,-1 515,1 525,0 557,1 570,0 614,1 635,0",
"59,0 66,1 69,0 72,-13 76,0 78,10 80,0 82,-10 85,22 88,0 90,-12 92,26 95,26 97,0 101,-10 105,-18 110,5 114,-20 117,0 119,-18 122,0 124,16 127,0 131,-22 134,0 137,12 141,0 145,-20 148,8 150,16 153,0 158,10 161,0 165,-6 168,0 171,14 175,1 184,8 189,5 192,0 198,16 203,-2 207,4 213,13 218,3 224,12 228,4 233,5 240,4 248,2 254,4 260,2 264,5 270,1 275,3 285,1 297,-2 304,0 310,-3 317,-3 322,0 334,-3 340,0 345,-3 352,0 370,-2 380,0 403,2 415,0 430,2 440,0 452,2 460,0 470,2 482,2 495,1 505,0 522,2 535,1 550,0 635,0",
"59,0 61,-8 62,13 66,13 67,-10 70,-26 73,-22 74,26 82,26 84,0 88,-26 92,-12 97,-20 101,-18 105,0 108,-20 112,-15 115,-14 118,-26 122,-8 125,0 126,26 131,26 132,0 137,-16 142,-2 144,10 147,26 224,26 230,14 236,7 241,4 245,2 252,6 256,0 262,-3 272,-7 280,-4 290,-9 300,-7 309,-9 322,-6 335,-8 345,-5 357,-4 366,-5 375,-2 390,0 405,1 415,0 425,2 445,2 460,1 475,0 490,1 530,0 545,-1 560,0 570,-1 580,0 605,-1 635,0"
];
const picks = [159,154,153,149,143,142,139,135,134,129,126,119,118,115,110,106,95,87,82,77,68,62];

// Trace 7 is overdriven and swings between both limits: [start, end, peak].
const bursts = [[159,166,26],[174,177,26],[188,192,26],[206,209,26],[212,219,26],[224,228,26],[232,236,26],[243,246,2],
[254,258,26],[264,268,26],[273,279,26],[292,302,26],[310,318,26],[336,340,26],[347,356,26],[366,371,26],[379,383,26],[388,392,26],
[400,404,26],[415,416,18],[425,431,26],[441,446,26],[456,463,26],[472,475,26],[494,495,2],[503,508,26],[527,532,26],[541,547,26],[559,566,26],[576,577,18]];
const squares = ["59,-22 156,-22"];
bursts.forEach(([a, b, p]) => squares.push(`${a - 2},-22 ${a},${p} ${b},${p} ${b + 1},-22`));
squares.push("590,-22 592,-5 594,-22 596,-22 635,-22");
traces[6] = squares.join(" ");

const left = 288, right = 860;
const xOf = i => 300.5 + i * 26.02;
const line = (c, x1, y1, x2, y2) => `<line class="${c}" x1="${x1}" y1="${y1}" x2="${x2}" y2="${y2}"/>`;
let defs = `<clipPath id="area"><rect x="${left}" y="59" width="${right - left}" height="577"/></clipPath>`;
let out = "";

const rows = [105,151,197,243,290,336,382,428,474,520,566,612];
rows.forEach((y, i) => {
  out += line("grid-line", 281, y + 0.5, right, y + 0.5);
  out += `<text x="278" y="${y + 5}" text-anchor="end">${(i + 1) * 40}.0</text>`;
});
[82,128,174,220,266,312,358,404,451,497,543,589].forEach(y => { out += line("dots", 289, y + 0.5, right, y + 0.5); });
out += `<text x="281" y="77" text-anchor="end">(ms)</text>`;

let curves = "", lobes = "";
traces.forEach((t, i) => {
  const x0 = xOf(i);
  const p = t.split(" ").map(s => s.split(",").map(Number));
  let d = `M${(x0 + p[0][1]).toFixed(1)} ${p[0][0]}`;
  for (let k = 1; k < p.length; k++) {
    const [ya, a] = p[k - 1], [yb, b] = p[k], h = (yb - ya) * 0.4;
    d += `C${(x0 + a).toFixed(1)} ${(ya + h).toFixed(1)} ${(x0 + b).toFixed(1)} ${(yb - h).toFixed(1)} ${(x0 + b).toFixed(1)} ${yb}`;
  }
  defs += `<clipPath id="c${i}"><rect x="${x0 - 0.5}" y="59" width="27" height="576"/></clipPath>`;
  curves += `<path class="wiggle" d="${d}"/>`;
  lobes += `<path class="lobe" clip-path="url(#c${i})" d="${d}L${x0} 635L${x0} 59Z"/>`;
  out += `<text x="${x0}" y="38" text-anchor="middle">${i + 1}</text><text x="${x0}" y="51" text-anchor="middle">${i * 2 + 1}.0</text>`;
  out += line("tick", Math.floor(x0) + 0.5, 53, Math.floor(x0) + 0.5, 59);
});
out += `<g clip-path="url(#area)">${curves}${lobes}</g>`;
out += line("axis", 281, 59, right, 59) + line("axis", 281, 635, right, 635);
picks.forEach((y, i) => { out += line("pick", Math.max(left, xOf(i) - 12), y + 0.5, Math.min(right, xOf(i) + 12), y + 0.5); });
document.getElementById("chart").innerHTML = `<defs>${defs}</defs>${out}`;
```
